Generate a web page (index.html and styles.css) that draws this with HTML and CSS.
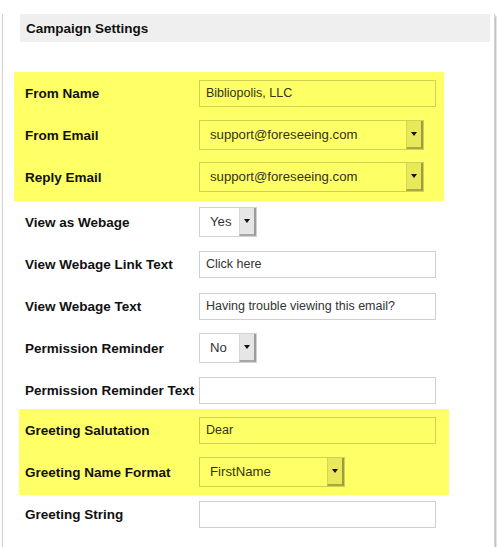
FILE: index.html
```html
<!DOCTYPE html>
<html>

<head>
    <title>Campaign Settings</title>
    <link rel="stylesheet" href="styles.css">
</head>

<body>
    <div class="panel">
        <div class="panel_title">Campaign Settings</div>

        <div class="marked marked_top">
            <div class="row">
                <label>From Name</label>
                <input class="field" type="text" value="Bibliopolis, LLC">
            </div>
            <div class="row">
                <label>From Email</label>
                <div class="select wide">
                    <span class="select_text">support@foreseeing.com</span>
                    <span class="select_btn"><i></i></span>
                </div>
            </div>
            <div class="row">
                <label>Reply Email</label>
                <div class="select wide">
                    <span class="select_text">support@foreseeing.com</span>
                    <span class="select_btn"><i></i></span>
                </div>
            </div>
        </div>

        <div class="row">
            <label>View as Webage</label>
            <div class="select small">
                <span class="select_text">Yes</span>
                <span class="select_btn"><i></i></span>
            </div>
        </div>
        <div class="row">
            <label>View Webage Link Text</label>
            <input class="field" type="text" value="Click here">
        </div>
        <div class="row">
            <label>View Webage Text</label>
            <input class="field" type="text" value="Having trouble viewing this email?">
        </div>
        <div class="row">
            <label>Permission Reminder</label>
            <div class="select small">
                <span class="select_text">No</span>
                <span class="select_btn"><i></i></span>
            </div>
        </div>
        <div class="row">
            <label>Permission Reminder Text</label>
            <input class="field" type="text" value="">
        </div>

        <div class="marked marked_bottom">
            <div class="row">
                <label>Greeting Salutation</label>
                <input class="field" type="text" value="Dear">
            </div>
            <div class="row">
                <label>Greeting Name Format</label>
                <div class="select medium">
                    <span class="select_text">FirstName</span>
                    <span class="select_btn"><i></i></span>
                </div>
            </div>
        </div>

        <div class="row">
            <label>Greeting String</label>
            <input class="field" type="text" value="">
        </div>
    </div>
</body>

</html>
```

FILE: styles.css
```css
body {
    margin: 0;
    background-color: #fff;
    font-family: "Liberation Sans", Arial, sans-serif;
    font-size: 13px;
    color: #111;
}

.panel {
    margin-left: 2px;
    width: 491px;
    height: 542px;
    border: 1px solid #d4d4d4;
    border-top: none;
    box-shadow: 1px 2px 2px rgba(0, 0, 0, 0.35);
    background-color: #fff;
}

.panel_title {
    margin: 14px 4px 30px 17px;
    height: 28px;
    line-height: 29px;
    padding-left: 6px;
    background-color: #efefef;
    font-weight: bold;
    font-size: 13.5px;
}

.row {
    display: flex;
    align-items: center;
    height: 42px;
    padding-left: 22px;
}

.row label {
    width: 174px;
    font-weight: bold;
    font-size: 13.5px;
    color: #111;
}

.field {
    box-sizing: border-box;
    width: 237px;
    height: 27px;
    margin: 0;
    padding: 0 6px;
    border: 1px solid #cfcfcf;
    background-color: #fff;
    font-family: "Liberation Sans", Arial, sans-serif;
    font-size: 12.5px;
    color: #333;
    outline: none;
}

/* fake drop-down: text box plus grey arrow button */
.select {
    box-sizing: border-box;
    display: flex;
    height: 30px;
    border: 1px solid #d2d2d2;
    background-color: #fff;
}

.select.wide {
    width: 225px;
}

.select.small {
    width: 58px;
}

.select.medium {
    width: 146px;
}

.select_text {
    flex: 1;
    padding-left: 10px;
    line-height: 28px;
    font-size: 13.2px;
    color: #333;
}

.select_btn {
    box-sizing: border-box;
    width: 17px;
    height: 28px;
    display: flex;
    align-items: center;
    justify-content: center;
    background-color: #e6e6e6;
    border-left: 1px solid #d8d8d8;
    border-right: 2px solid #9c9c9c;
    border-bottom: 2px solid #a8a8a8;
}

.select_btn i {
    width: 0;
    height: 0;
    border-left: 3px solid transparent;
    border-right: 3px solid transparent;
    border-top: 4px solid #111;
}

/* yellow marker over the important rows */
.marked {
    width: 430px;
    background-color: #ffff66;
}

.marked_top {
    margin-left: 11px;
    padding-bottom: 3px;
}

.marked_top .row {
    padding-left: 11px;
}

.marked_bottom {
    margin: -2px 0 -2px 16px;
    padding-bottom: 2px;
}

.marked_bottom .row {
    padding-left: 6px;
}

.marked .field,
.marked .select {
    background-color: transparent;
    border-color: #d0d052;
}

.marked .select_text,
.marked .field {
    color: #333314;
}

.marked .select_btn {
    background-color: #e8e85a;
    border-left-color: #d6d654;
    border-right-color: #9c9c40;
    border-bottom-color: #a8a844;
}
```
